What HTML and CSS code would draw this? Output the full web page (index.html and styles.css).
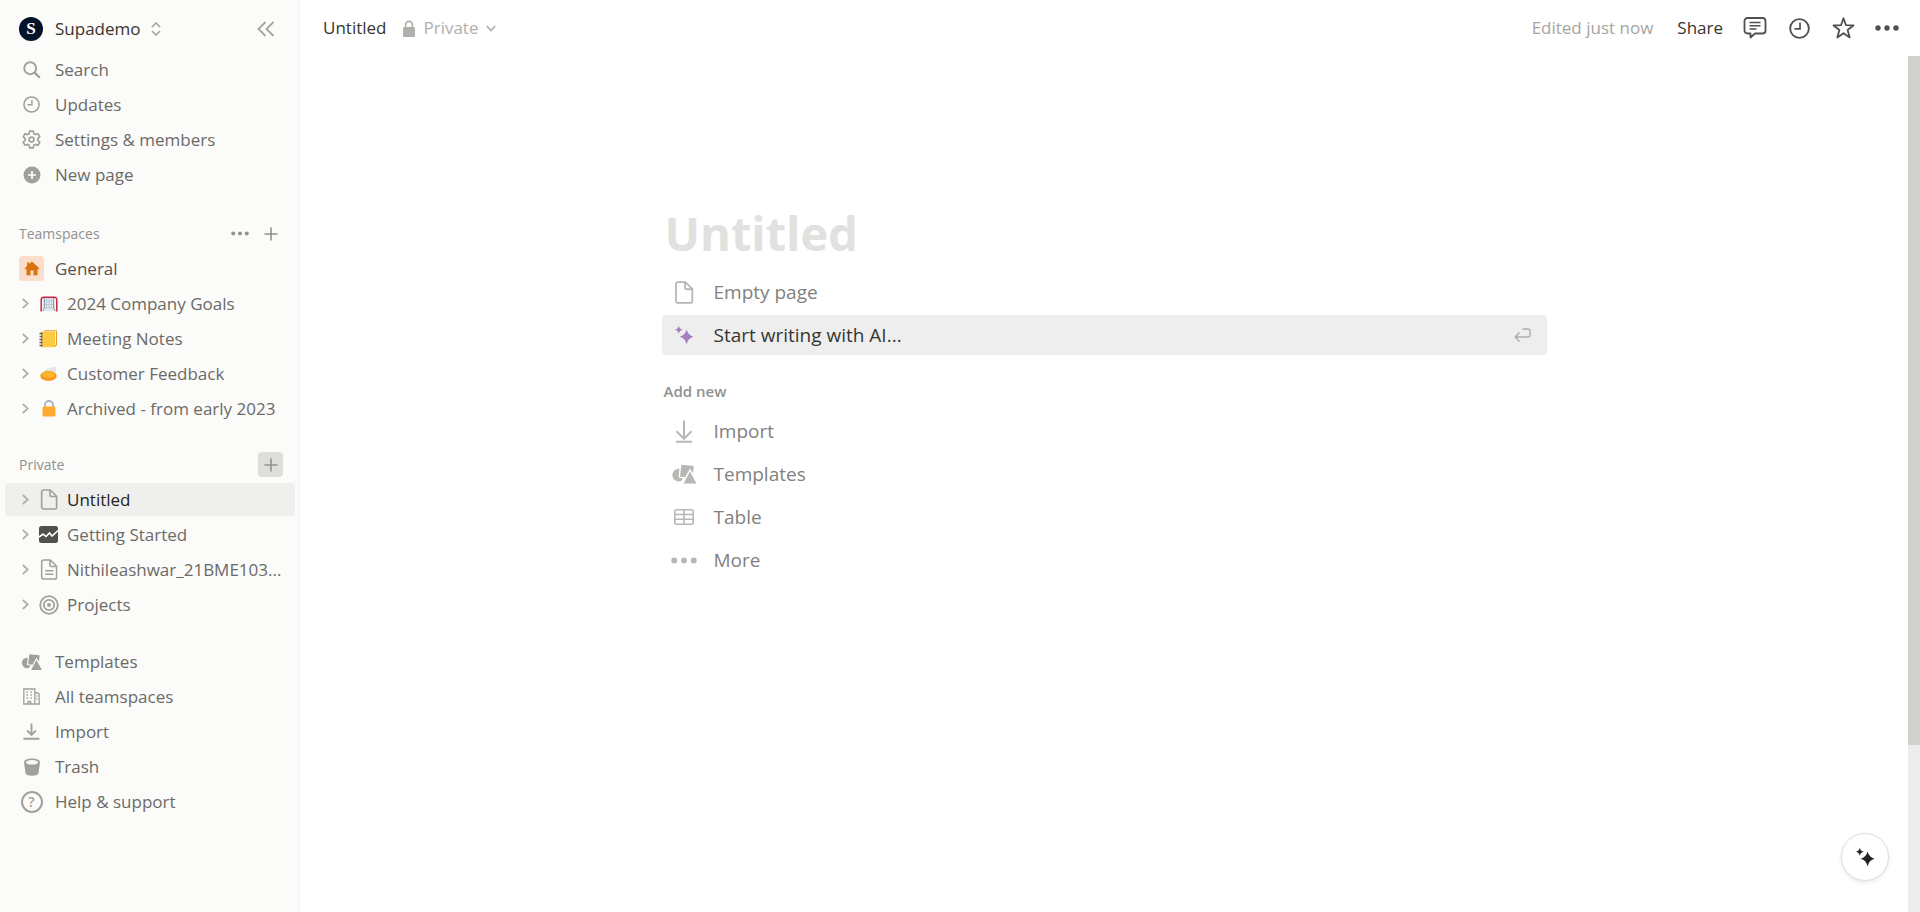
FILE: index.html
```html
<!DOCTYPE html>
<html lang="en">
<head>
    <meta charset="UTF-8">
    <meta name="viewport" content="width=device-width, initial-scale=1.0">
    <title>Untitled</title>
    <link rel="stylesheet" href="styles.css">
</head>
<body>
    <!-- Shared icons -->
    <svg class="sprite" aria-hidden="true">
        <symbol id="chevron" viewBox="0 0 10 14">
            <path d="M2 2l5.500 5L2 12" fill="none" stroke="currentColor" stroke-width="1.900"/>
        </symbol>
        <symbol id="plus" viewBox="0 0 14 14">
            <path d="M7 .5v13M.5 7h13" fill="none" stroke="currentColor" stroke-width="1.600"/>
        </symbol>
        <symbol id="dots" viewBox="0 0 24 6">
            <circle cx="3" cy="3" r="2.700"/><circle cx="12" cy="3" r="2.700"/><circle cx="21" cy="3" r="2.700"/>
        </symbol>
        <symbol id="clock" viewBox="0 0 20 20">
            <circle cx="10" cy="10" r="8.900" fill="none" stroke="currentColor" stroke-width="1.800"/>
            <path d="M10.500 4.300v6H5.200" fill="none" stroke="currentColor" stroke-width="1.600"/>
        </symbol>
        <symbol id="page" viewBox="0 0 18 22">
            <path d="M3.500 1h6.800L17 7.600v11.200a2.200 2.200 0 0 1-2.200 2.200H3.500a2.200 2.200 0 0 1-2.200-2.200V3.200A2.200 2.200 0 0 1 3.500 1z M10 1.200v5.200a1.500 1.500 0 0 0 1.500 1.500h5.300" fill="none" stroke="currentColor" stroke-width="1.700"/>
        </symbol>
        <symbol id="shapes" viewBox="0 0 24 19">
            <path d="M7.600 4.600a6 6 0 1 0 2.100 11.300l1-2.300-3.800-.7z"/>
            <path d="M9.500.6l11.800 1.300-.7 6.900-3-4.300-4.400 8.200-5-.7z"/>
            <path d="M17.700 7.200l6.200 11.300H11.600z"/>
        </symbol>
        <symbol id="sparkles" viewBox="0 0 20 20">
            <path d="M4.800.8q.7 3.400 4 4-3.300.7-4 4-.7-3.300-4-4 3.300-.6 4-4z"/>
            <path d="M12.600 4.600q1.400 5.800 7 7.100-5.600 1.300-7 7.500-1.400-6.200-7-7.500 5.600-1.300 7-7.100z"/>
        </symbol>
        <symbol id="lock" viewBox="0 0 12 17">
            <path d="M2.600 8V4.800a3.400 3.400 0 0 1 6.800 0V8" fill="none" stroke="currentColor" stroke-width="1.700"/>
            <rect y="7" width="12" height="10" rx="1.500"/>
        </symbol>
    </svg>

    <div class="app">
        <aside class="sidebar">
            <div class="workspace">
                <button class="workspace-switch">
                    <span class="workspace-logo">S</span>
                    <span>Supademo</span>
                    <svg class="line" width="10" height="14" viewBox="0 0 10 14" stroke="#a5a4a0" stroke-width="1.600"><path d="M1 5l4-4 4 4M1 9l4 4 4-4"/></svg>
                </button>
                <button class="icon-btn collapse" aria-label="Close sidebar">
                    <svg class="line" width="18" height="16" viewBox="0 0 18 16" stroke="currentColor" stroke-width="1.800"><path d="M8.500 1l-7 7 7 7M16.500 1l-7 7 7 7"/></svg>
                </button>
            </div>

            <nav class="menu">
                <a class="item" href="#">
                    <span class="item-icon"><svg class="line" width="18" height="18" viewBox="0 0 18 18" stroke="currentColor"><circle cx="7.200" cy="7.200" r="6" stroke-width="1.900"/><path d="M11.600 11.600l5.200 5.200" stroke-width="2.300"/></svg></span>
                    <span class="item-text">Search</span>
                </a>
                <a class="item" href="#">
                    <span class="item-icon"><svg width="17" height="17"><use href="#clock"/></svg></span>
                    <span class="item-text">Updates</span>
                </a>
                <a class="item" href="#">
                    <span class="item-icon"><svg class="line" width="19" height="19" viewBox="0 0 18 18" stroke="currentColor" stroke-width="1.600" stroke-linejoin="round"><path d="M7.300 1h3.400l.5 2.500 1.500.9 2.400-.9 1.700 2.900-1.900 1.700v1.800l1.900 1.700-1.700 2.900-2.400-.9-1.500.9-.5 2.500H7.300l-.5-2.500-1.500-.9-2.400.9-1.700-2.900 1.900-1.700V8.100L1.200 6.400l1.700-2.900 2.400.9 1.500-.9z"/><circle cx="9" cy="9" r="2.300"/></svg></span>
                    <span class="item-text">Settings &amp; members</span>
                </a>
                <a class="item" href="#">
                    <span class="item-icon"><svg width="18" height="18" viewBox="0 0 18 18"><circle cx="9" cy="9" r="8.500"/><path d="M9 5v8M5 9h8" stroke="#fff" stroke-width="1.700"/></svg></span>
                    <span class="item-text">New page</span>
                </a>
            </nav>

            <nav class="menu teamspaces">
                <div class="menu-head">
                    <h2>Teamspaces</h2>
                    <button class="icon-btn" aria-label="Teamspace options"><svg width="18" height="5"><use href="#dots"/></svg></button>
                    <button class="icon-btn" aria-label="Add teamspace"><svg width="14" height="14"><use href="#plus"/></svg></button>
                </div>
                <a class="item general" href="#">
                    <span class="item-icon home"><svg width="16" height="15" viewBox="0 0 16 15"><path d="M8 .5l7.500 7-1 1-1-.7v6.500h-4V9.500h-3v4.800h-4V7.800l-1 .7-1-1L3 5V1.500h2.200V3z"/></svg></span>
                    <span class="item-text">General</span>
                </a>
                <a class="item page" href="#">
                    <svg class="arrow" width="9" height="13"><use href="#chevron"/></svg>
                    <span class="item-icon"><svg width="18" height="16" viewBox="0 0 18 16"><path d="M3.500 1.500h11v10.500l1 3h-13l1-3z" fill="#e1e8ef"/><path d="M4 12h10M6.500 2v10M9 2v10M11.500 2v10M4 5h10M4 8.500h10" stroke="#b5c4d1" fill="none" stroke-width=".8"/><path d="M4.300 2v10l-1.500 3M13.700 2v10l1.500 3" fill="none" stroke="#8396a5"/><path d="M1.200 15.500V4q0-2.800 2.300-2.800h11q2.300 0 2.300 2.800v11.500" fill="none" stroke="#c62847" stroke-width="1.500"/></svg></span>
                    <span class="item-text">2024 Company Goals</span>
                </a>
                <a class="item page" href="#">
                    <svg class="arrow" width="9" height="13"><use href="#chevron"/></svg>
                    <span class="item-icon"><svg width="19" height="19" viewBox="0 0 19 19"><path d="M5 1h11.500a1.500 1.500 0 0 1 1.500 1.500V16l-2 2H4z" fill="#e19b24"/><path d="M5 2.200h11.500V16" stroke="#fff4d6" fill="none"/><rect x="2.500" y="2.800" width="13.300" height="15.500" rx="1.200" fill="#ffc943"/><path d="M2.700 3v15" stroke="#d58a14"/><path d="M.5 4.500h3M.5 7.500h3M.5 10.500h3M.5 13.500h3M.5 16.500h3" stroke="#62605c" stroke-width="1.300"/></svg></span>
                    <span class="item-text">Meeting Notes</span>
                </a>
                <a class="item page" href="#">
                    <svg class="arrow" width="9" height="13"><use href="#chevron"/></svg>
                    <span class="item-icon"><svg width="17" height="16" viewBox="0 0 17 16"><path d="M4 6q1-3 4-3.500T13 .8L16 1v5l-3 2H4z" fill="#e5e5e3"/><ellipse cx="8.500" cy="10" rx="8.200" ry="5" fill="#f6991d"/><ellipse cx="8.500" cy="8.800" rx="6.500" ry="3" fill="#ffb62c"/></svg></span>
                    <span class="item-text">Customer Feedback</span>
                </a>
                <a class="item page" href="#">
                    <svg class="arrow" width="9" height="13"><use href="#chevron"/></svg>
                    <span class="item-icon"><svg width="14" height="17" viewBox="0 0 14 17"><path d="M3 8V5a4 4 0 0 1 8 0v3" fill="none" stroke="#a4b4c0" stroke-width="1.800"/><rect x=".5" y="6.500" width="13" height="10" rx="1.500" fill="#ffa92e"/></svg></span>
                    <span class="item-text">Archived - from early 2023</span>
                </a>
            </nav>

            <nav class="menu private">
                <div class="menu-head">
                    <h2>Private</h2>
                    <button class="icon-btn active" aria-label="Add a page"><svg width="14" height="14"><use href="#plus"/></svg></button>
                </div>
                <a class="item page selected" href="#">
                    <svg class="arrow" width="9" height="13"><use href="#chevron"/></svg>
                    <span class="item-icon"><svg width="18" height="21"><use href="#page"/></svg></span>
                    <span class="item-text">Untitled</span>
                </a>
                <a class="item page" href="#">
                    <svg class="arrow" width="9" height="13"><use href="#chevron"/></svg>
                    <span class="item-icon"><svg width="19" height="17" viewBox="0 0 19 17"><rect width="19" height="17" rx="2.500" fill="#50504c"/><path d="M0 11l4-3 3 2.500L10.500 7l2.500 3 6-5.500" fill="none" stroke="#fff" stroke-width="1.600"/></svg></span>
                    <span class="item-text">Getting Started</span>
                </a>
                <a class="item page" href="#">
                    <svg class="arrow" width="9" height="13"><use href="#chevron"/></svg>
                    <span class="item-icon"><svg width="18" height="21" viewBox="0 0 18 22"><use href="#page" width="18" height="22"/><path d="M5 12.300h8.500M5 16h8.500" stroke="currentColor" stroke-width="1.500"/></svg></span>
                    <span class="item-text">Nithileashwar_21BME103...</span>
                </a>
                <a class="item page" href="#">
                    <svg class="arrow" width="9" height="13"><use href="#chevron"/></svg>
                    <span class="item-icon"><svg class="line" width="20" height="20" viewBox="0 0 20 20" stroke="currentColor" stroke-width="1.800"><circle cx="10" cy="10" r="8.800"/><circle cx="10" cy="10" r="5.200"/><circle cx="10" cy="10" r="2" fill="currentColor" stroke="none"/></svg></span>
                    <span class="item-text">Projects</span>
                </a>
            </nav>

            <nav class="menu tools">
                <a class="item" href="#">
                    <span class="item-icon"><svg width="21" height="18"><use href="#shapes"/></svg></span>
                    <span class="item-text">Templates</span>
                </a>
                <a class="item" href="#">
                    <span class="item-icon"><svg class="line" width="17" height="17" viewBox="0 0 17 17" stroke="currentColor" stroke-width="1.300"><path d="M.8 16V1h11v15zM11.800 5h3.200l1.200 1.200V16h-4.400M5 16v-2.500h2.700V16"/><path d="M3.500 4h1.500M3.500 7h1.500M3.500 10h1.500M7.500 4h1.500M7.500 7h1.500M7.500 10h1.500M13.300 8h1.200M13.300 11h1.200" stroke-width="1.500"/></svg></span>
                    <span class="item-text">All teamspaces</span>
                </a>
                <a class="item" href="#">
                    <span class="item-icon"><svg class="line" width="17" height="17" viewBox="0 0 17 17" stroke="currentColor" stroke-width="1.900"><path d="M8.500.5v11M4 7.300l4.500 4.500L13 7.300M.5 15.700h16"/></svg></span>
                    <span class="item-text">Import</span>
                </a>
                <a class="item" href="#">
                    <span class="item-icon"><svg width="16" height="18" viewBox="0 0 16 18"><path d="M0 4.200C0-.8 16-.8 16 4.200L14.500 15.300C14 18.600 2 18.600 1.500 15.300z"/><ellipse class="hole" cx="8" cy="4.300" rx="6" ry="2.300"/></svg></span>
                    <span class="item-text">Trash</span>
                </a>
                <a class="item" href="#">
                    <span class="item-icon"><span class="help">?</span></span>
                    <span class="item-text">Help &amp; support</span>
                </a>
            </nav>
        </aside>

        <main class="main">
            <header class="topbar">
                <a class="crumb" href="#">Untitled</a>
                <button class="privacy">
                    <svg width="12" height="17"><use href="#lock"/></svg>
                    <span>Private</span>
                    <svg class="line" width="10" height="7" viewBox="0 0 10 7" stroke="currentColor" stroke-width="1.600"><path d="M.8 1L5 5.500 9.200 1"/></svg>
                </button>
                <span class="edited">Edited just now</span>
                <button class="share">Share</button>
                <div class="actions">
                    <button aria-label="Comments"><svg class="line" width="24" height="22" viewBox="0 0 24 22" stroke="currentColor" stroke-width="1.800" stroke-linejoin="round"><path d="M4.500 1h15a3 3 0 0 1 3 3v9.500a3 3 0 0 1-3 3H12l-4.500 4v-4h-3a3 3 0 0 1-3-3V4a3 3 0 0 1 3-3z"/><path d="M6.500 5.500h11M6.500 8.700h11M6.500 12h7" stroke-width="1.400"/></svg></button>
                    <button aria-label="Updates"><svg width="21" height="21"><use href="#clock"/></svg></button>
                    <button aria-label="Favorite"><svg class="line" width="23" height="22" viewBox="0 0 23 22" stroke="currentColor" stroke-width="1.800" stroke-linejoin="round"><path d="M11.500 1.300l2.500 6.900 7.500.3-5.900 4.500 2.100 7.400-6.200-4.200-6.200 4.200 2.100-7.400L1.500 8.500l7.500-.3z"/></svg></button>
                    <button aria-label="More"><svg width="24" height="6"><use href="#dots"/></svg></button>
                </div>
            </header>

            <div class="scroller">
                <article class="document">
                    <h1>Untitled</h1>
                    <div class="options">
                        <button class="option">
                            <svg width="19" height="23"><use href="#page"/></svg>
                            <span>Empty page</span>
                        </button>
                        <button class="option highlighted">
                            <svg width="20" height="20"><use href="#sparkles"/></svg>
                            <span>Start writing with AI...</span>
                            <svg class="enter line" width="17" height="15" viewBox="0 0 17 15" stroke="currentColor" stroke-width="1.500"><path d="M8.500 1h5.500a2 2 0 0 1 2 2v4a2 2 0 0 1-2 2H1.500M5.500 4.500L1.200 9l4.300 4.500"/></svg>
                        </button>
                    </div>
                    <h3>Add new</h3>
                    <div class="options">
                        <button class="option">
                            <svg class="line" width="18" height="23" viewBox="0 0 18 23" stroke="currentColor" stroke-width="2"><path d="M9 .5v18M1.500 11.300L9 18.800l7.500-7.500M1 21.700h16"/></svg>
                            <span>Import</span>
                        </button>
                        <button class="option">
                            <svg width="25" height="20"><use href="#shapes"/></svg>
                            <span>Templates</span>
                        </button>
                        <button class="option">
                            <svg class="line" width="20" height="16" viewBox="0 0 20 16" stroke="currentColor" stroke-width="1.600"><rect x=".8" y=".8" width="18.400" height="14.400" rx="2"/><path d="M1 5.500h18M1 10.300h18M10 1v14"/></svg>
                            <span>Table</span>
                        </button>
                        <button class="option">
                            <svg width="26" height="7"><use href="#dots"/></svg>
                            <span>More</span>
                        </button>
                    </div>
                </article>
                <div class="scrollbar"><div class="thumb"></div></div>
                <button class="ai-button" aria-label="Ask AI"><svg width="20" height="20"><use href="#sparkles"/></svg></button>
            </div>
        </main>
    </div>
</body>
</html>
```
FILE: styles.css
```css
* {
    box-sizing: border-box;
}
body {
    margin: 0;
    font-family: "Open Sans", "Noto Sans", sans-serif;
    font-size: 17px;
    line-height: 24px;
    color: #37352f;
    background-color: #fff;
}
a {
    color: inherit;
    text-decoration: none;
}
button {
    display: flex;
    align-items: center;
    padding: 0;
    border: none;
    background: none;
    color: inherit;
    font: inherit;
    cursor: pointer;
}
svg {
    display: block;
    flex: none;
    fill: currentColor;
}
.line {
    fill: none;
}
h1, h2, h3 {
    margin: 0;
}
.sprite {
    position: absolute;
    width: 0;
    height: 0;
}
.app {
    display: flex;
    min-height: 100vh;
}

/* Sidebar */
.sidebar {
    flex: none;
    width: 300px;
    padding: 0 4px 0 5px;
    background-color: #fbfbfa;
    border-right: 1px solid #f5f5f3;
    font-weight: 500;
}
.workspace {
    display: flex;
    align-items: center;
    justify-content: space-between;
    height: 53px;
    padding: 4px 17px 0 14px;
}
.workspace-switch {
    gap: 10px;
}
.workspace-logo {
    width: 24px;
    height: 24px;
    margin-right: 2px;
    border-radius: 50%;
    background-color: #031329;
    color: #fff;
    font-family: "Liberation Serif", serif;
    font-size: 17px;
    font-weight: bold;
    text-align: center;
}
.menu {
    display: flex;
    flex-direction: column;
    gap: 2px;
}
.teamspaces {
    margin-top: 26px;
}
.private {
    margin-top: 23px;
}
.tools {
    margin-top: 24px;
}
.menu-head {
    display: flex;
    align-items: center;
    gap: 6px;
    height: 33px;
    padding: 0 12px 0 14px;
}
.menu-head h2 {
    flex: 1;
    color: #91918e;
    font-size: 14px;
    font-weight: 500;
}
.icon-btn {
    justify-content: center;
    width: 25px;
    height: 25px;
    border-radius: 4px;
    color: #91918e;
}
.icon-btn.active {
    background-color: #dededc;
}
.collapse {
    color: #a5a4a0;
}
.item {
    display: flex;
    align-items: center;
    height: 33px;
    padding: 0 6px 0 14px;
    border-radius: 4px;
    color: #6b6a66;
}
.item-icon {
    display: flex;
    flex: none;
    align-items: center;
    justify-content: center;
    width: 25px;
    height: 25px;
    margin-right: 11px;
    color: #a1a09c;
}
.item-text {
    overflow: hidden;
    white-space: nowrap;
    text-overflow: ellipsis;
}
.page .item-icon {
    margin: 0 6px;
}
.arrow {
    margin-left: 2px;
    color: #b0afac;
}
.home {
    border-radius: 4px;
    background-color: #fadec9;
    color: #d9730d;
}
.general {
    color: #55534e;
}
.selected {
    background-color: #efefee;
    color: #252420;
}
.hole {
    fill: #fbfbfa;
}
.help {
    width: 22px;
    height: 22px;
    border: 2px solid #a1a09c;
    border-radius: 50%;
    font-size: 14px;
    font-weight: 600;
    line-height: 18px;
    text-align: center;
}

/* Top bar */
.main {
    display: flex;
    flex: 1;
    flex-direction: column;
    min-width: 0;
}
.topbar {
    display: flex;
    align-items: center;
    height: 56px;
    padding: 0 21px 0 23px;
}
.privacy {
    gap: 8px;
    margin-left: 17px;
    color: #b0afac;
}
.edited {
    margin-left: auto;
    color: #a5a4a0;
}
.share {
    margin: 0 20px 0 24px;
}
.actions {
    display: flex;
    gap: 20px;
    color: #50504c;
}
.actions button {
    justify-content: center;
    width: 24px;
    height: 24px;
}

/* Document */
.scroller {
    position: relative;
    display: flex;
    flex: 1;
}
.document {
    flex: 1;
    max-width: 885px;
    margin: 0 auto;
    padding-top: 146px;
}
h1 {
    padding-left: 3px;
    color: #e1e1e0;
    font-size: 47px;
    font-weight: 700;
    line-height: 62px;
}
.options {
    display: flex;
    flex-direction: column;
    gap: 3px;
    padding-top: 8px;
}
.option {
    gap: 17px;
    height: 40px;
    padding: 0 16px 0 9px;
    border-radius: 4px;
    color: #82817d;
    font-size: 19px;
    text-align: left;
}
/* every leading icon sits in a 26px column */
.option > svg:first-child {
    width: 26px;
    color: #b8b7b4;
}
.option.highlighted {
    background-color: #eeeeee;
    color: #37352f;
}
.option.highlighted > svg:first-child {
    color: #a47fc0;
}
.enter {
    margin-left: auto;
    color: #b0afac;
}
h3 {
    padding: 24px 0 0 2px;
    color: #91918e;
    font-size: 15px;
    font-weight: 600;
}
.scrollbar {
    width: 12px;
    background-color: #ececea;
}
.thumb {
    height: 80.5%;
    background-color: #d1d1cd;
}
.ai-button {
    position: absolute;
    right: 31px;
    bottom: 31px;
    justify-content: center;
    width: 48px;
    height: 48px;
    border: 1px solid #dededc;
    border-radius: 50%;
    background-color: #fff;
    box-shadow: 0 2px 4px rgba(0,0,0,0.08);
    color: #252420;
}
```
